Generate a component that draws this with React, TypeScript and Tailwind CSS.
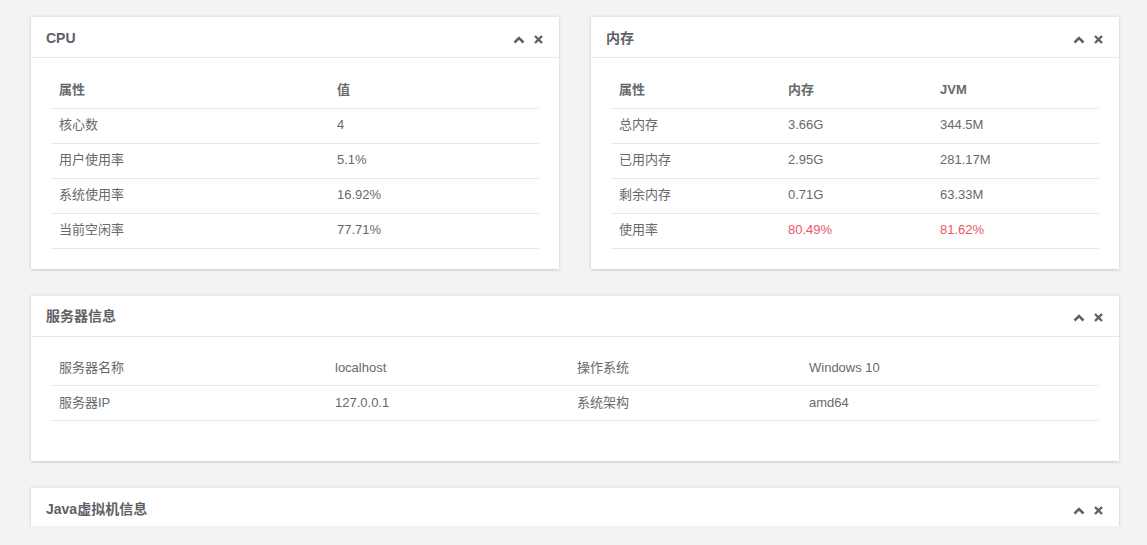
import React from "react";

const font = { fontFamily: '"Liberation Sans", "Noto Sans CJK SC", sans-serif' };

function PanelTools() {
  return (
    <div className="flex items-center gap-[9px] text-[#5e6266] pt-[4px]">
      <svg width="12" height="9" viewBox="0 0 12 9">
        <path d="M1.5 7.5 L6 3 L10.5 7.5" fill="none" stroke="currentColor" strokeWidth="2.6" />
      </svg>
      <svg width="9" height="9" viewBox="0 0 9 9">
        <path d="M1 1 L8 8 M8 1 L1 8" fill="none" stroke="currentColor" strokeWidth="2.4" />
      </svg>
    </div>
  );
}

function Panel({
  title,
  children,
  bodyClass = "pt-[15px] pb-[20px]",
}: {
  title: string;
  children?: React.ReactNode;
  bodyClass?: string;
}) {
  return (
    <div className="bg-white border-t border-[#e7eaec] shadow-[0_1px_3px_rgba(0,0,0,0.18)]">
      <div className="h-[41px] px-[15px] flex items-center justify-between border-b border-[#e7eaec]">
        <span className="text-[14px] font-bold text-[#5e6266] pt-[2px]">{title}</span>
        <div className="pr-[1px]">
          <PanelTools />
        </div>
      </div>
      {children !== undefined && <div className={`px-[20px] ${bodyClass}`}>{children}</div>}
    </div>
  );
}

type Cell = { text: string; red?: boolean };

function Table({ widths, head, rows }: { widths: string[]; head?: string[]; rows: Cell[][] }) {
  return (
    <table className="w-full border-collapse text-[13px] text-[#676a6c] table-fixed">
      <colgroup>
        {widths.map((w, i) => (
          <col key={i} style={{ width: w }} />
        ))}
      </colgroup>
      {head && (
        <thead>
          <tr className="h-[35px] border-b border-[#e7eaec]">
            {head.map((h, i) => (
              <th key={i} className="text-left font-bold px-[8px] pb-[1px]">
                {h}
              </th>
            ))}
          </tr>
        </thead>
      )}
      <tbody>
        {rows.map((r, i) => (
          <tr key={i} className="h-[35px] border-b border-[#e7eaec]">
            {r.map((c, j) => (
              <td key={j} className={`px-[8px] pb-[1px] ${c.red ? "text-[#ed5565]" : ""}`}>
                {c.text}
              </td>
            ))}
          </tr>
        ))}
      </tbody>
    </table>
  );
}

const t = (s: string, red = false): Cell => ({ text: s, red });

export default function App() {
  return (
    <div className="w-[1147px] h-[545px] bg-[#f3f3f4]" style={font}>
      <div className="h-[526px] overflow-hidden pl-[31px] pr-[28px] pt-[16px] flex flex-col gap-[26px]">
        <div className="grid grid-cols-2 gap-[32px]">
          <Panel title="CPU">
            <Table
              widths={["278px", "210px"]}
              head={["属性", "值"]}
              rows={[
                [t("核心数"), t("4")],
                [t("用户使用率"), t("5.1%")],
                [t("系统使用率"), t("16.92%")],
                [t("当前空闲率"), t("77.71%")],
              ]}
            />
          </Panel>
          <Panel title="内存">
            <Table
              widths={["169px", "152px", "167px"]}
              head={["属性", "内存", "JVM"]}
              rows={[
                [t("总内存"), t("3.66G"), t("344.5M")],
                [t("已用内存"), t("2.95G"), t("281.17M")],
                [t("剩余内存"), t("0.71G"), t("63.33M")],
                [t("使用率"), t("80.49%", true), t("81.62%", true)],
              ]}
            />
          </Panel>
        </div>
        <Panel title="服务器信息" bodyClass="pt-[14px] pb-[40px]">
          <Table
            widths={["276px", "242px", "232px", "298px"]}
            rows={[
              [t("服务器名称"), t("localhost"), t("操作系统"), t("Windows 10")],
              [t("服务器IP"), t("127.0.0.1"), t("系统架构"), t("amd64")],
            ]}
          />
        </Panel>
        <Panel title="Java虚拟机信息">
          <div className="h-[200px]" />
        </Panel>
      </div>
    </div>
  );
}
